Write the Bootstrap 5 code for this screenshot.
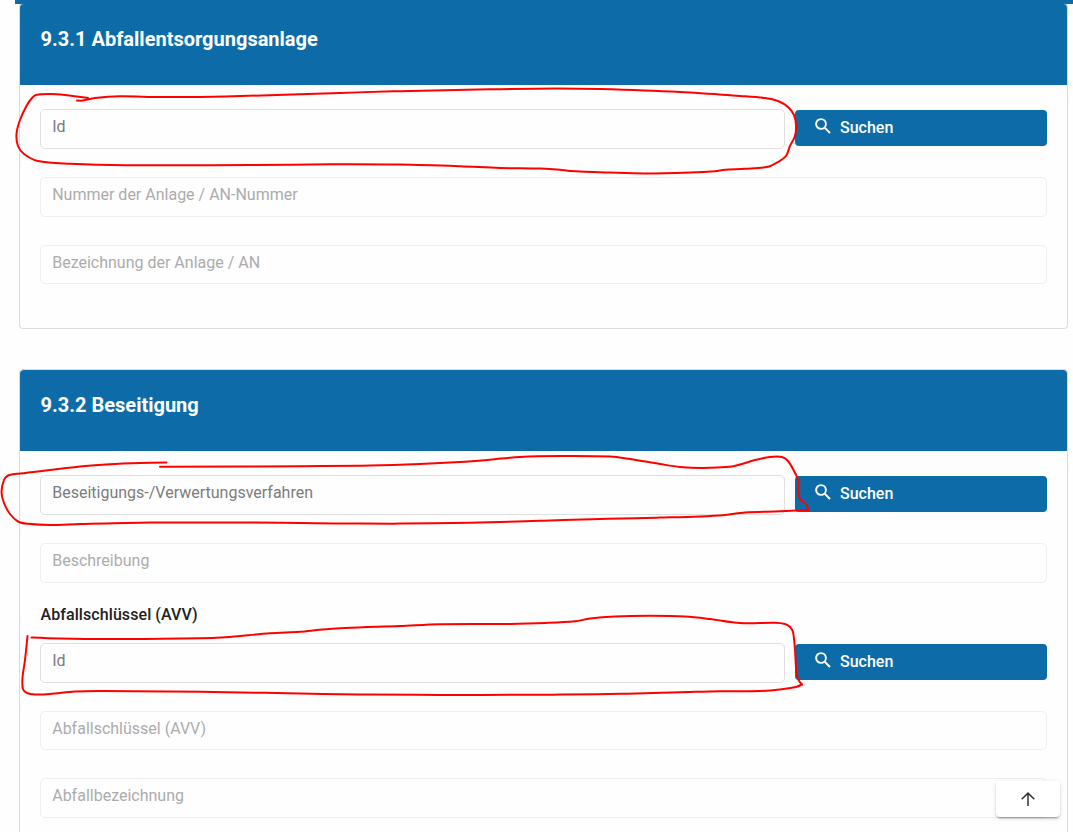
<!DOCTYPE html>
<html lang="de">
<head>
<meta charset="utf-8">
<meta name="viewport" content="width=device-width, initial-scale=1">
<title>Abfallentsorgung</title>
<link href="https://cdn.jsdelivr.net/npm/bootstrap@5.3.0/dist/css/bootstrap.min.css" rel="stylesheet">
<style>
  :root { --brand: #0d6ca7; }
  body { font-family: Roboto, sans-serif; font-size: 16px; color: #212121; background: #fefefe; height: 832px; }
  .page { padding: 0 5px 0 19px; }
  .topline { height: 3px; margin-left: 15px; background: var(--brand); box-shadow: 0 1px 0 var(--brand); }
  .panel { border: 1px solid #dcdcdc; border-radius: 4px; background: #fefefe; margin-bottom: 40px; }
  .panel-first { border-top-color: var(--brand); }
  .panel-last { height: 463px; margin-bottom: 0; border-bottom: 0; border-radius: 4px 4px 0 0; }
  .panel > .card-header { height: 81px; flex: none; padding: 20px 20.5px; background: var(--brand); color: #fff; border: 0; border-radius: 4px 4px 0 0; }
  .panel h2 { font-size: 20px; line-height: 30px; font-weight: 700; margin: 0; }
  .panel > .card-body { padding: 24px 20px 16px; }
  .panel-last > .card-body { padding-bottom: 0; }
  .field { height: 40px; margin-bottom: 28px; border: 1px solid #dfdfdf; border-radius: 5px; padding: 0 11.2px; line-height: 33px; color: #7c7c7c; background: #fefefe; white-space: nowrap; }
  .field.off { border-color: #efefef; color: #acacac; }
  .field.slim { height: 39px; }
  .field-short { width: 745px; flex: none; }
  .field-last { margin-bottom: 0; }
  .btn-search { width: 252px; height: 36px; margin-top: 1px; padding: 0 20px; border: 0; border-radius: 4px; background: var(--brand); color: #fff; line-height: 36px; font-weight: 500; }
  .btn-search svg { width: 16px; height: 16px; margin: -5px 9px 0 0; }
  .group-title { font-size: 16px; line-height: 24px; font-weight: 500; letter-spacing: .08px; height: 40px; margin: -8px 0 0; padding-left: .5px; }
  .to-top { right: 13px; top: 781px; width: 64px; height: 36px; border-radius: 4px; background: #fff; border: 0; box-shadow: 0 3px 1px -2px rgba(0,0,0,.2), 0 2px 2px rgba(0,0,0,.14), 0 1px 5px rgba(0,0,0,.12); }
  .pen { left: 0; top: 0; pointer-events: none; }
</style>
</head>
<body class="position-relative overflow-hidden">
<div class="topline"></div>
<main class="page">
  <section class="card panel panel-first">
    <div class="card-header"><h2>9.3.1 Abfallentsorgungsanlage</h2></div>
    <div class="card-body">
      <div class="d-flex align-items-start justify-content-between">
        <div class="field field-short">Id</div>
        <button class="btn btn-search d-flex align-items-center"><svg viewBox="0 0 16 16" fill="none" stroke="currentColor" stroke-width="1.9"><circle cx="6" cy="6" r="4.9"/><path d="M9.6 9.6 15 15"/></svg>Suchen</button>
      </div>
      <div class="field off">Nummer der Anlage / AN-Nummer</div>
      <div class="field off slim">Bezeichnung der Anlage / AN</div>
    </div>
  </section>
  <section class="card panel panel-last">
    <div class="card-header"><h2>9.3.2 Beseitigung</h2></div>
    <div class="card-body">
      <div class="d-flex align-items-start justify-content-between">
        <div class="field field-short">Beseitigungs-/Verwertungsverfahren</div>
        <button class="btn btn-search d-flex align-items-center"><svg viewBox="0 0 16 16" fill="none" stroke="currentColor" stroke-width="1.9"><circle cx="6" cy="6" r="4.9"/><path d="M9.6 9.6 15 15"/></svg>Suchen</button>
      </div>
      <div class="field off">Beschreibung</div>
      <h3 class="group-title">Abfallschlüssel (AVV)</h3>
      <div class="d-flex align-items-start justify-content-between">
        <div class="field field-short">Id</div>
        <button class="btn btn-search d-flex align-items-center"><svg viewBox="0 0 16 16" fill="none" stroke="currentColor" stroke-width="1.9"><circle cx="6" cy="6" r="4.9"/><path d="M9.6 9.6 15 15"/></svg>Suchen</button>
      </div>
      <div class="field off slim">Abfallschlüssel (AVV)</div>
      <div class="field off field-last">Abfallbezeichnung</div>
    </div>
  </section>
</main>
<button class="to-top position-absolute d-flex align-items-center justify-content-center p-0" aria-label="Nach oben">
  <svg width="14" height="14" viewBox="0 0 14 14" fill="none" stroke="#333" stroke-width="1.5"><path d="M7 14V1.2M.7 7.3 7 1.1l6.3 6.2"/></svg>
</button>
<svg class="pen position-absolute" width="1073" height="832" fill="none" stroke="#f00" stroke-width="2" stroke-linecap="round" stroke-linejoin="round">
  <path data-pts="88,98 65,95 50,94 36,95 32,98 27,105 20,120 16.5,134 18,146 24,154 38,161 70,163.7 125,165.2 250,165 340,164.3 400,164.6 460,166.3 500,168 540,168.6 560,169.7 570,171 610,172.6 645,173.5 690,172.5 715,171.2 725,169.8 745,168.8 768,166.8 778,162 786,156 790,146 795,136 796,125 794,115 788,107 778,101 765,98 740,95.9 680,92 600,89.1 555,88.5 490,89.3 400,91.2 340,92.9 225,96.5 160,97 120,96.3 95,98 83,100.5 77,100.5"/>
  <path data-pts="166.5,462.5 140,463 110,464.2 80,466.5 50,470 20,473.5 8,475.5 4,480 1.5,492 4,503 10,514 18,521.5 28,523.8 50,525 80,524 140,522.7 240,522.5 300,523 340,523.5 400,523.6 470,522.7 540,520.8 600,519 660,517.6 700,516.5 725,515 745,512.5 780,511.3 808.5,510"/>
  <path data-pts="808.5,510 806,504 800,499 798,490 798,480 794,471 788,461 782,457 770,457 755,460 740,464.5 730,466.8 703,468 680,467 660,464 630,459 610,456.5 560,456 520,457 490,459.7 460,462 420,464 370,465.5 300,466.2 160,466.8"/>
  <path data-pts="31.5,637.5 60,638.5 110,639 200,638.3 225,637.2 270,633.2 300,631.7 320,629.8 345,628 400,626 440,624.2 510,623.9 545,623 575,621.3 590,618.5 615,616.5 650,615.8 685,616.5 710,619 740,623 775,622.8 785,624 790,627 793,632 795,650 796,667 798,679 802,684.5"/>
  <path data-pts="802,684.5 796,687 780,689.5 760,691 720,691.2 680,692.3 620,693.8 560,694.6 440,694.9 370,694.6 300,693.5 200,691.8 100,691 75,691.6 50,694 35,694.5 27,693 23,689 22.5,678 25,660 27.5,636"/>
</svg>
<script>
  // Smooth each pen stroke through its points with cubic segments.
  document.querySelectorAll('.pen path').forEach(el => {
    const p = el.dataset.pts.split(' ').map(s => s.split(',').map(Number));
    let d = 'M' + p[0];
    const len = (u, v) => Math.hypot(u[0] - v[0], u[1] - v[1]);
    const tan = i => {
      if (i === 0 || i === p.length - 1) return [0, 0];
      const x = p[i + 1][0] - p[i - 1][0], y = p[i + 1][1] - p[i - 1][1], l = Math.hypot(x, y) || 1;
      return [x / l, y / l];
    };
    for (let i = 0; i < p.length - 1; i++) {
      const k = len(p[i], p[i + 1]) / 3, a = tan(i), b = tan(i + 1);
      d += `C${p[i][0] + a[0] * k},${p[i][1] + a[1] * k} ${p[i + 1][0] - b[0] * k},${p[i + 1][1] - b[1] * k} ${p[i + 1]}`;
    }
    el.setAttribute('d', d);
  });
</script>
<script src="https://cdn.jsdelivr.net/npm/bootstrap@5.3.0/dist/js/bootstrap.bundle.min.js"></script>
</body>
</html>
